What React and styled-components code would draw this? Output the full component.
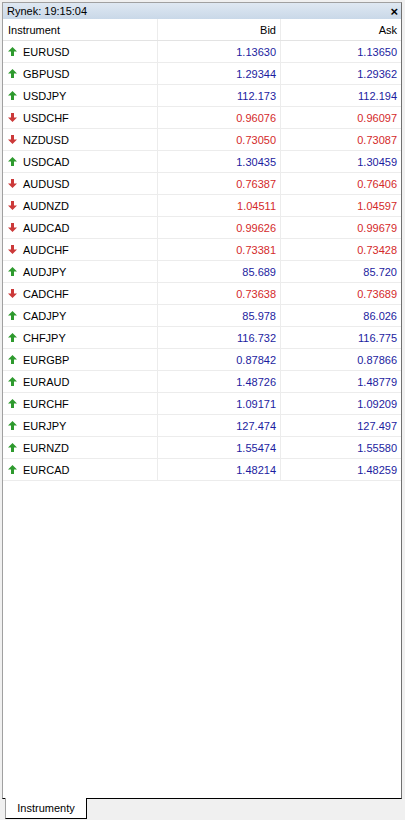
import React from 'react'
import styled, { createGlobalStyle } from 'styled-components'

const quotes = [
  ['EURUSD', 'up', '1.13630', '1.13650'],
  ['GBPUSD', 'up', '1.29344', '1.29362'],
  ['USDJPY', 'up', '112.173', '112.194'],
  ['USDCHF', 'down', '0.96076', '0.96097'],
  ['NZDUSD', 'down', '0.73050', '0.73087'],
  ['USDCAD', 'up', '1.30435', '1.30459'],
  ['AUDUSD', 'down', '0.76387', '0.76406'],
  ['AUDNZD', 'down', '1.04511', '1.04597'],
  ['AUDCAD', 'down', '0.99626', '0.99679'],
  ['AUDCHF', 'down', '0.73381', '0.73428'],
  ['AUDJPY', 'up', '85.689', '85.720'],
  ['CADCHF', 'down', '0.73638', '0.73689'],
  ['CADJPY', 'up', '85.978', '86.026'],
  ['CHFJPY', 'up', '116.732', '116.775'],
  ['EURGBP', 'up', '0.87842', '0.87866'],
  ['EURAUD', 'up', '1.48726', '1.48779'],
  ['EURCHF', 'up', '1.09171', '1.09209'],
  ['EURJPY', 'up', '127.474', '127.497'],
  ['EURNZD', 'up', '1.55474', '1.55580'],
  ['EURCAD', 'up', '1.48214', '1.48259'],
]

export default function App() {
  return (
    <>
      <GlobalStyle />
      <Page>
        <Window>
          <TitleBar>
            <span>Rynek: 19:15:04</span>
            <Close>×</Close>
          </TitleBar>
          <Table>
            <HeadRow>
              <Cell>Instrument</Cell>
              <Cell $num>Bid</Cell>
              <Cell $num $last>Ask</Cell>
            </HeadRow>
            {quotes.map(([sym, dir, bid, ask]) => (
              <Row key={sym}>
                <Cell>
                  <Arrow dir={dir} />
                  {sym}
                </Cell>
                <Cell $num $dir={dir}>{bid}</Cell>
                <Cell $num $last $dir={dir}>{ask}</Cell>
              </Row>
            ))}
          </Table>
        </Window>
        <TabStrip>
          <Tab>Instrumenty</Tab>
        </TabStrip>
      </Page>
    </>
  )
}

function Arrow({ dir }) {
  const up = dir === 'up'
  return (
    <ArrowIcon width="9" height="9" viewBox="0 0 9 9">
      {up ? (
        <polygon points="4.5,0 9,4.5 6,4.5 6,9 3,9 3,4.5 0,4.5" fill="#2e9a2e" />
      ) : (
        <polygon points="4.5,9 9,4.5 6,4.5 6,0 3,0 3,4.5 0,4.5" fill="#cc3a3a" />
      )}
    </ArrowIcon>
  )
}

const GlobalStyle = createGlobalStyle`
  body {
    margin: 0;
    background: #f0f0f0;
    font-family: Tahoma, "Liberation Sans", Arial, sans-serif;
    font-size: 11px;
  }
`

const Page = styled.div`
  height: 820px;
  display: flex;
  flex-direction: column;
  padding: 2px 3px 0 2px;
  box-sizing: border-box;
  background: #f0f0f0;
`

const Window = styled.div`
  flex: 1;
  display: flex;
  flex-direction: column;
  background: #fff;
  border: 1px solid #a0a0a0;
  border-right-color: #707070;
  border-bottom: 1px solid #000;
`

const TitleBar = styled.div`
  height: 16px;
  display: flex;
  align-items: center;
  justify-content: space-between;
  padding: 0 3px 0 4px;
  background: linear-gradient(#dfe8f2, #c9d8e8);
  color: #000;
  font-size: 11px;
`

const Close = styled.span`
  font-weight: bold;
  font-size: 13px;
  line-height: 1;
`

const Table = styled.div`
  display: flex;
  flex-direction: column;
`

const Row = styled.div`
  display: grid;
  grid-template-columns: 155px 123px 1fr;
  height: 22px;
  border-bottom: 1px solid #ececec;
  box-sizing: border-box;
`

const HeadRow = styled(Row)`
  height: 22px;
  border-bottom: 1px solid #e3e3e3;
`

const Cell = styled.div`
  display: flex;
  align-items: center;
  justify-content: ${p => (p.$num ? 'flex-end' : 'flex-start')};
  padding: ${p => (p.$num ? '0 4px 0 0' : '0 0 0 5px')};
  border-right: ${p => (p.$last ? 'none' : '1px solid #ececec')};
  color: ${p => (p.$dir === 'up' ? '#1c1ca0' : p.$dir === 'down' ? '#d42a2a' : '#000')};
  white-space: nowrap;
`

const ArrowIcon = styled.svg`
  margin-right: 6px;
  flex: none;
`

const TabStrip = styled.div`
  height: 21px;
  display: flex;
  padding-left: 3px;
`

const Tab = styled.div`
  width: 80px;
  height: 20px;
  margin-top: -1px;
  background: #fff;
  border: 1px solid #000;
  border-left-color: #a0a0a0;
  border-top: none;
  display: flex;
  align-items: center;
  justify-content: center;
  font-size: 11px;
`
